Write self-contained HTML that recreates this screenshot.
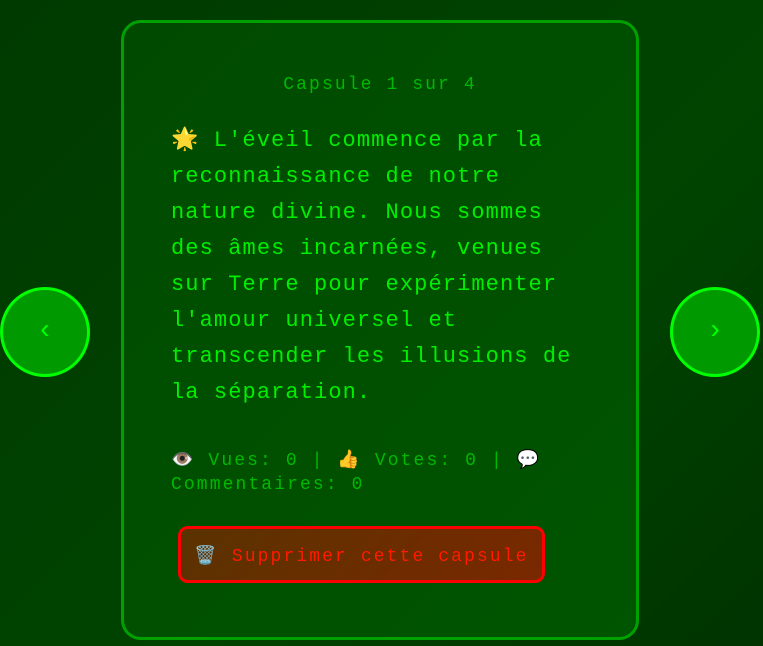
<!DOCTYPE html><html><head><meta charset="utf-8"><style>
body{margin:0;width:763px;height:646px;overflow:hidden;background:linear-gradient(135deg,#003a00,#004400 60%,#003300);font-family:"Courier New",Courier,"Nimbus Mono PS","FreeMono",monospace;position:relative}
.card{position:absolute;left:121px;top:20px;width:512px;height:614px;border:3px solid #00a000;border-radius:20px;background:linear-gradient(135deg,#004a00,#005500);}
.hdr{position:absolute;top:52px;left:0;width:100%;text-align:center;color:#00b800;font-size:18px;letter-spacing:2.1px}
.txt{position:absolute;left:47px;top:100px;width:420px;color:#00ee00;font-size:22px;letter-spacing:1.1px;line-height:36px}
.stats{position:absolute;left:47px;top:426px;width:400px;color:#00b800;font-size:18px;letter-spacing:2.1px;line-height:24px}
.btn{position:absolute;left:54px;top:503px;width:361px;height:51px;border:3px solid #ff0000;border-radius:10px;background:linear-gradient(135deg,#5a3300,#7a2800);color:#ff1a00;font-size:18px;letter-spacing:2.1px;line-height:56px;text-align:center}
.nav{position:absolute;top:287px;width:84px;height:84px;border:3px solid #00ff00;border-radius:50%;background:#009a00;color:#00ff00;font-size:28px;text-align:center;line-height:84px}
</style></head><body>
<div class="nav" style="left:0">‹</div>
<div class="nav" style="left:670px">›</div>
<div class="card">
<div class="hdr">Capsule 1 sur 4</div>
<div class="txt">🌟 L'éveil commence par la reconnaissance de notre nature divine. Nous sommes des âmes incarnées, venues sur Terre pour expérimenter l'amour universel et transcender les illusions de la séparation.</div>
<div class="stats">👁️ Vues: 0 | 👍 Votes: 0 | 💬 Commentaires: 0</div>
<div class="btn">🗑️ Supprimer cette capsule</div>
</div>
</body></html>
